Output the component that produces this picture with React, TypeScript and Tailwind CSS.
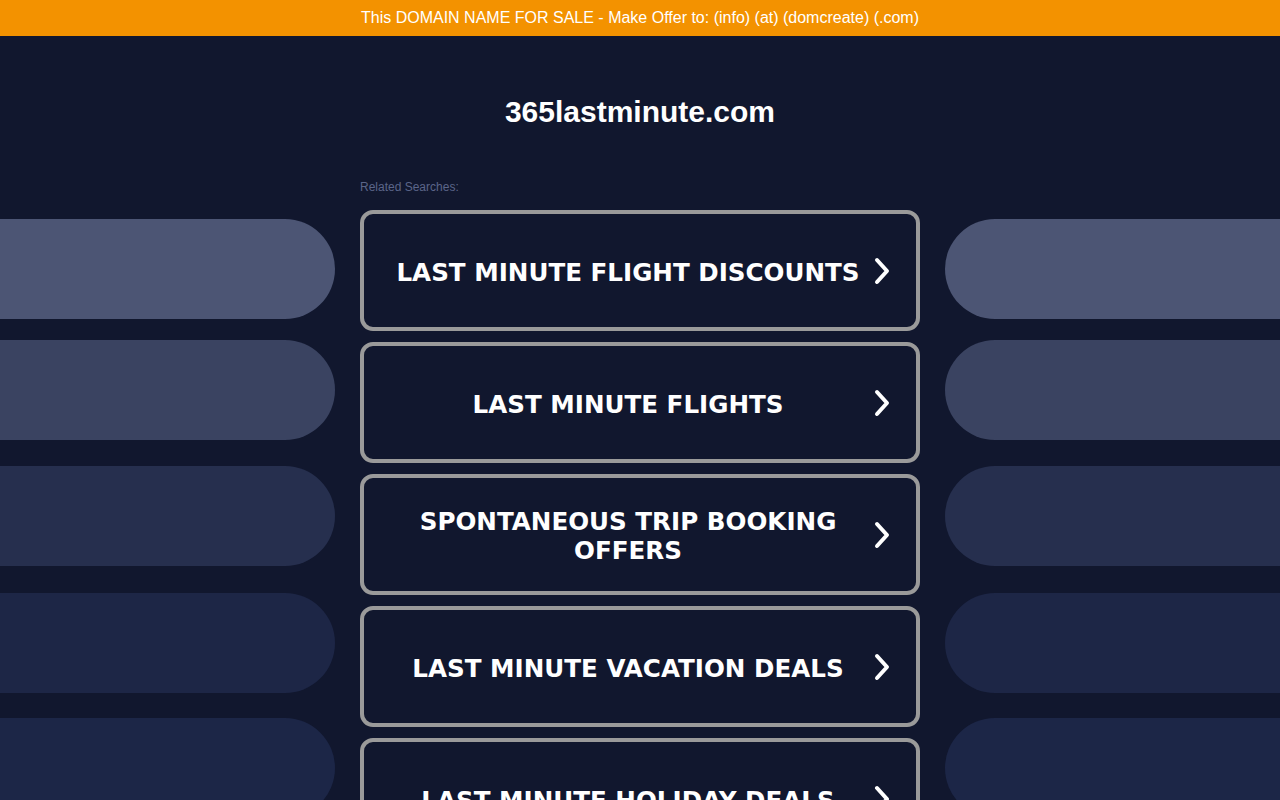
import React from "react";

const items = [
  "LAST MINUTE FLIGHT DISCOUNTS",
  "LAST MINUTE FLIGHTS",
  "SPONTANEOUS TRIP BOOKING OFFERS",
  "LAST MINUTE VACATION DEALS",
  "LAST MINUTE HOLIDAY DEALS",
];

function Chevron() {
  return (
    <svg width="20" height="28" viewBox="0 0 20 28" fill="none">
      <polyline
        points="5,3 15,14 5,25"
        stroke="white"
        strokeWidth="4"
        strokeLinecap="round"
        strokeLinejoin="round"
      />
    </svg>
  );
}

function SideBars({ side }: { side: "left" | "right" }) {
  const round = side === "left" ? "rounded-r-[50px]" : "rounded-l-[50px]";
  return (
    <div className="flex flex-col w-[335px] pt-[219px]">
      <div className={`shrink-0 h-[100px] bg-[#4c5574] ${round}`} />
      <div className={`shrink-0 h-[100px] mt-[21px] bg-[#3a4361] ${round}`} />
      <div className={`shrink-0 h-[100px] mt-[26px] bg-[#262f4e] ${round}`} />
      <div className={`shrink-0 h-[100px] mt-[27px] bg-[#1d2646] ${round}`} />
      <div className={`shrink-0 h-[100px] mt-[25px] bg-[#1c2647] ${round}`} />
    </div>
  );
}

export default function App() {
  return (
    <div
      className="relative w-full h-[800px] overflow-hidden bg-[#11172e]"
      style={{ fontFamily: '"Liberation Sans", Arial, sans-serif' }}
    >
      <div className="absolute inset-0 flex justify-between pointer-events-none">
        <SideBars side="left" />
        <SideBars side="right" />
      </div>
      <div className="relative flex flex-col">
        <div className="h-[36px] bg-[#f39200] flex items-center justify-center text-white text-[16px]">
          This DOMAIN NAME FOR SALE - Make Offer to: (info) (at) (domcreate) (.com)
        </div>
        <div className="w-[560px] mx-auto flex flex-col">
          <h1 className="mt-[58px] text-center text-white font-bold text-[30px] leading-[36px]">
            365lastminute.com
          </h1>
          <div className="mt-[50px] text-[12px] leading-[14px] text-[#5b6589]">
            Related Searches:
          </div>
          <div className="mt-[16px] flex flex-col gap-[11px]">
            {items.map((t) => (
              <div
                key={t}
                className="shrink-0 h-[121px] border-[4px] border-[#9a9a9a] rounded-[13px] bg-[#11172e] flex items-center pl-[28px] pr-[16px]"
              >
                <div
                  className="flex-1 pt-[3px] text-center text-white font-bold text-[24.6px] leading-[29px]"
                  style={{ fontFamily: '"DejaVu Sans", Verdana, sans-serif' }}
                >
                  {t}
                </div>
                <div className="w-[36px] flex items-center justify-center">
                  <Chevron />
                </div>
              </div>
            ))}
          </div>
        </div>
      </div>
    </div>
  );
}
